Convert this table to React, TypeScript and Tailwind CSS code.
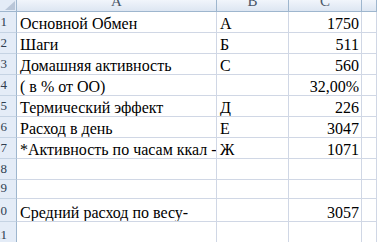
import React from "react";

type Row = { n: string; a?: string; b?: string; c?: string; h: string };

const rows: Row[] = [
  { n: "1", a: "Основной Обмен", b: "А", c: "1750", h: "h-[21px]" },
  { n: "2", a: "Шаги", b: "Б", c: "511", h: "h-[21px]" },
  { n: "3", a: "Домашняя активность", b: "С", c: "560", h: "h-[21px]" },
  { n: "4", a: "( в % от ОО)", c: "32,00%", h: "h-[21px]" },
  { n: "5", a: "Термический эффект", b: "Д", c: "226", h: "h-[21px]" },
  { n: "6", a: "Расход в день", b: "Е", c: "3047", h: "h-[21px]" },
  { n: "7", a: "*Активность по часам ккал -", b: "Ж", c: "1071", h: "h-[21px]" },
  { n: "8", h: "h-[21px]" },
  { n: "9", h: "h-[19px]" },
  { n: "10", a: "Средний расход по весу-", c: "3057", h: "h-[23px]" },
  { n: "11", h: "h-[24px]" },
];

const cell =
  "flex items-end overflow-hidden whitespace-nowrap border-r border-b border-[#d0d7e5] text-[16px] leading-none text-black";

export default function App() {
  return (
    <div className="w-[377px] h-[242px] overflow-hidden bg-white font-['Liberation_Serif','Times_New_Roman',serif]">
      {/* header row */}
      <div className="flex h-[12px]">
        <div className="w-[17px] shrink-0 border-r border-b border-[#9eb6ce] bg-[#e4ecf7]">
          <svg width="16" height="11" viewBox="0 0 16 11">
            <polygon points="15,1 15,10 5,10" fill="#b9c6d8" />
          </svg>
        </div>
        {[
          ["A", "w-[200px]"],
          ["B", "w-[72px]"],
          ["C", "w-[73px]"],
          ["", "flex-1"],
        ].map(([l, w], i) => (
          <div
            key={i}
            className={`${w} shrink-0 flex items-end justify-center pb-[2px] overflow-hidden border-r border-b border-[#9eb6ce] bg-gradient-to-b from-[#f1f5fb] to-[#dde6f2] text-[15px] leading-none text-[#4a5668]`}
          >
            {l}
          </div>
        ))}
      </div>
      {rows.map((r) => (
        <div key={r.n} className={`flex ${r.h}`}>
          <div className="w-[17px] shrink-0 flex items-end justify-end pr-[9px] pb-[4px] overflow-hidden border-r border-b border-r-[#9eb6ce] border-b-[#c5d3e3] bg-[#e4ecf7] text-[13px] leading-none text-[#2f3d50]">
            {r.n}
          </div>
          <div className={`${cell} w-[200px] shrink-0 pl-[3px]`}>{r.a}</div>
          <div className={`${cell} w-[72px] shrink-0 pl-[3px]`}>{r.b}</div>
          <div className={`${cell} w-[73px] shrink-0 justify-end pr-[2px]`}>{r.c}</div>
          <div className={`${cell} flex-1`}></div>
        </div>
      ))}
    </div>
  );
}
